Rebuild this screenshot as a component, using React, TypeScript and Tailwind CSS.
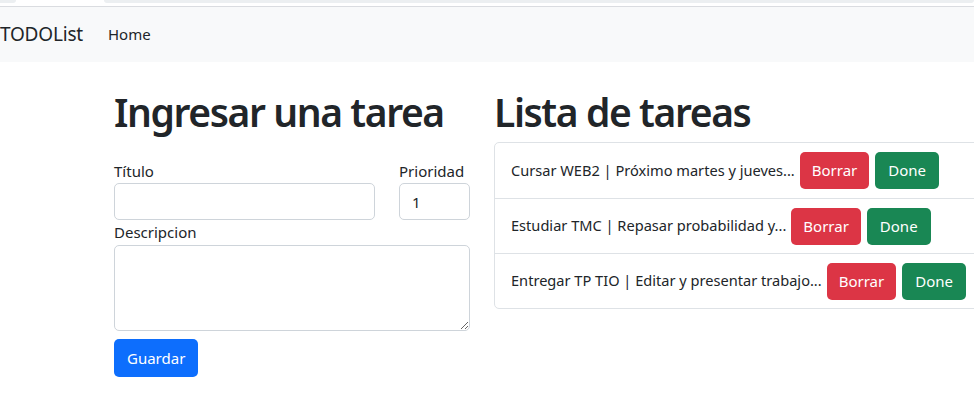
const tareas = [
  { texto: "Cursar WEB2 | Próximo martes y jueves..." },
  { texto: "Estudiar TMC | Repasar probabilidad y..." },
  { texto: "Entregar TP TIO | Editar y presentar trabajo..." },
];

const App = () => {
  return (
    <div className="w-[974px] h-[403px] overflow-hidden bg-white text-[#212529] font-['Noto_Sans',sans-serif]">
      <div className="h-[7px] bg-white border-b border-[#dadce0] relative">
        <div className="absolute left-[104px] right-0 top-0 h-[3px] rounded-b-full bg-[#eceff1]"></div>
        <div className="absolute left-0 w-[16px] top-0 h-[3px] rounded-br-full bg-[#eceff1]"></div>
      </div>
      <nav className="h-[55px] bg-[#f8f9fa] flex items-center">
        <span className="text-[19px] leading-none tracking-[-0.2px] text-[#212529]">TODOList</span>
        <a href="#" className="ml-[25px] text-[15px] text-[#212529]">Home</a>
      </nav>
      <div className="flex gap-[24px] pl-[114px] pt-[26px]">
        <div className="w-[356px] shrink-0">
          <h1 className="text-[39px] font-semibold leading-[48px] tracking-[-1.4px] whitespace-nowrap">Ingresar una tarea</h1>
          <div className="mt-[24px] flex gap-[24px]">
            <div className="flex-1">
              <label className="block text-[15px] leading-[23px]">Título</label>
              <input className="w-full h-[37px] border border-[#ced4da] rounded-[5px] px-3" />
            </div>
            <div className="w-[71px]">
              <label className="block text-[15px] leading-[23px]">Prioridad</label>
              <input className="w-full h-[37px] border border-[#ced4da] rounded-[5px] px-3 text-[15px]" defaultValue="1" />
            </div>
          </div>
          <label className="block text-[15px] leading-[25px]">Descripcion</label>
          <textarea className="block w-full h-[86px] border border-[#ced4da] rounded-[5px]"></textarea>
          <button className="mt-[8px] h-[38px] px-[13px] bg-[#0d6efd] text-white text-[15px] rounded-[5px]">Guardar</button>
        </div>
        <div className="w-[520px] shrink-0">
          <h1 className="text-[39px] font-semibold leading-[48px] tracking-[-1.4px] whitespace-nowrap">Lista de tareas</h1>
          <ul className="mt-[6px] border border-[#dee2e6] rounded-[5px]">
            {tareas.map((t, i) => (
              <li key={i} className={"h-[55px] flex items-center pl-[16px] text-[14.6px] " + (i > 0 ? "border-t border-[#dee2e6]" : "")}>
                <span>{t.texto}</span>
                <button className="ml-[5px] h-[37px] px-[12px] bg-[#dc3545] text-white text-[15px] rounded-[5px]">Borrar</button>
                <button className="ml-[6px] h-[37px] px-[13px] bg-[#198754] text-white text-[15px] rounded-[5px]">Done</button>
              </li>
            ))}
          </ul>
        </div>
      </div>
    </div>
  );
};

export default App;
